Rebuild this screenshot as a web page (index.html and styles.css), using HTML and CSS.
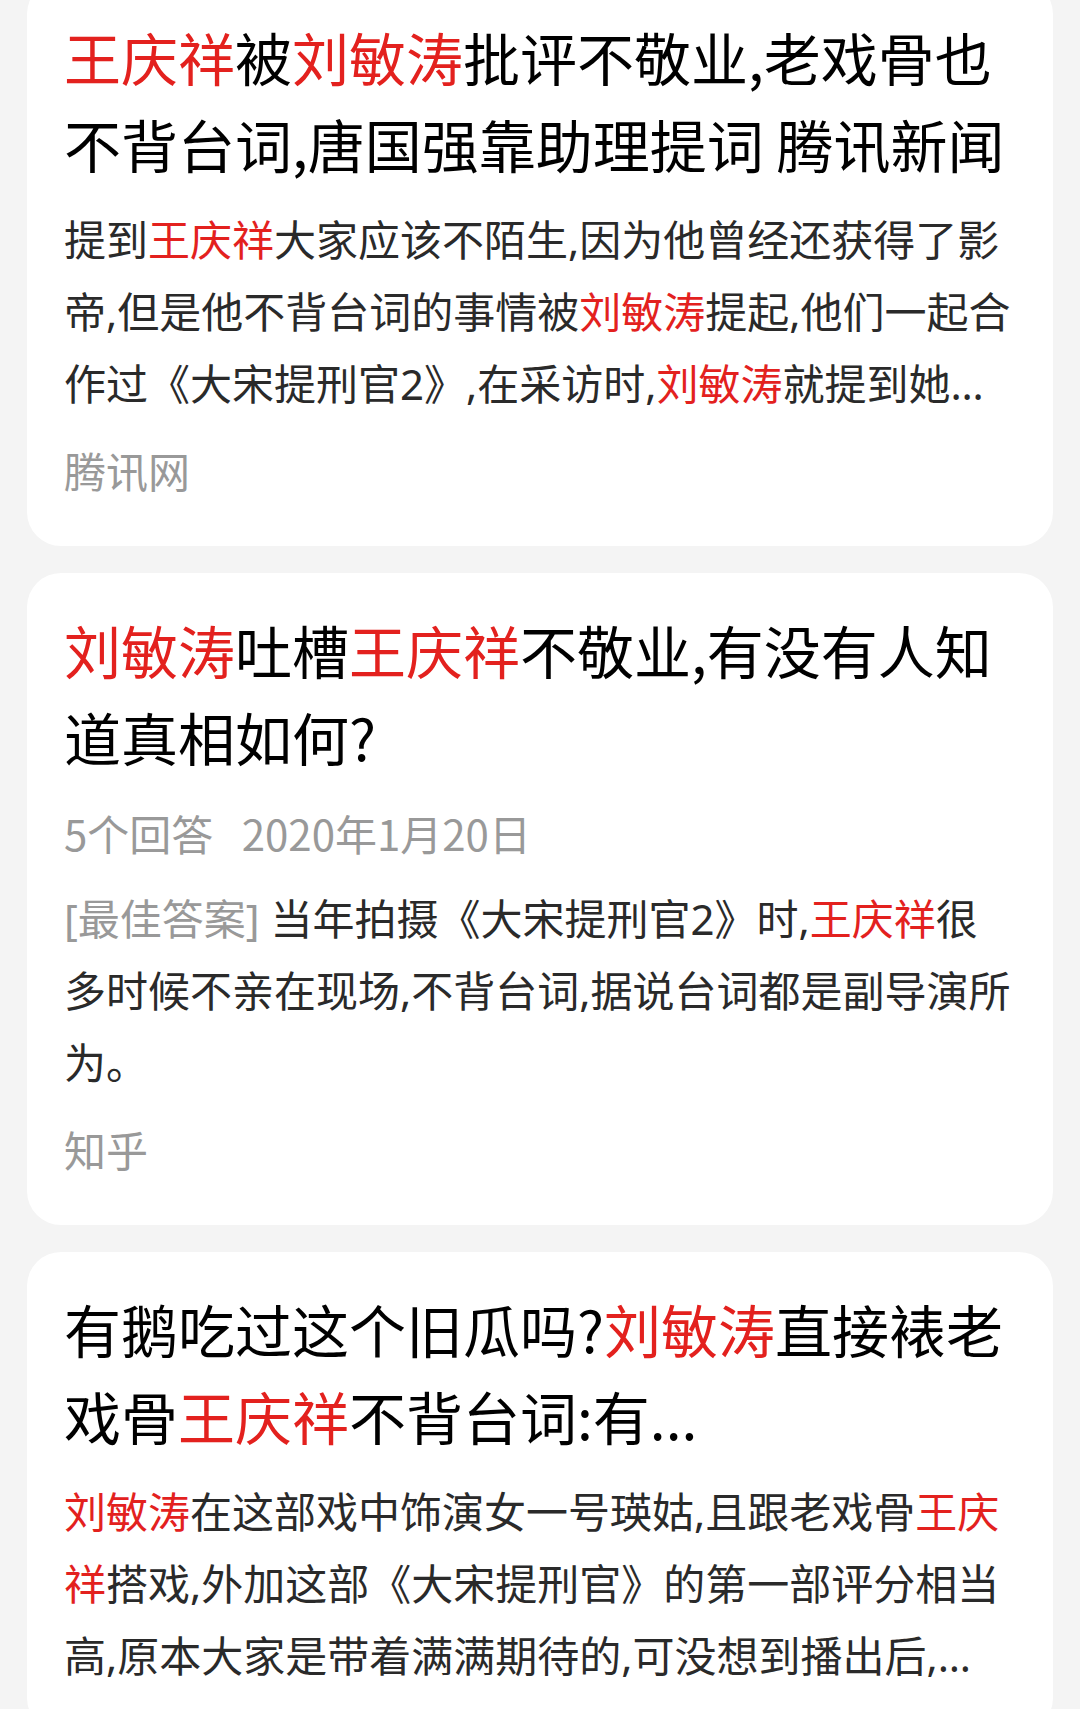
FILE: index.html
```html
<!DOCTYPE html>
<html lang="zh-CN">
<head>
    <meta charset="UTF-8">
    <meta name="viewport" content="width=device-width, initial-scale=1.0">
    <title>王庆祥 刘敏涛 - 搜索结果</title>
    <link rel="stylesheet" href="styles.css">
</head>
<body>

<div class="results">
    <div class="card scrolled">
        <h3 class="title"><em>王庆祥</em>被<em>刘敏涛</em>批评不敬业,老戏骨也不背台词,唐国强靠助理提词 腾讯新闻</h3>
        <p class="abstract clamp">提到<em>王庆祥</em>大家应该不陌生,因为他曾经还获得了影帝,但是他不背台词的事情被<em>刘敏涛</em>提起,他们一起合作过《大宋提刑官2》,在采访时,<em>刘敏涛</em>就提到她…</p>
        <div class="source">腾讯网</div>
    </div>

    <div class="card">
        <h3 class="title"><em>刘敏涛</em>吐槽<em>王庆祥</em>不敬业,有没有人知道真相如何?</h3>
        <div class="meta">
            <span>5个回答</span>
            <span class="date">2020年1月20日</span>
        </div>
        <p class="abstract"><span class="tag">[最佳答案]</span> 当年拍摄《大宋提刑官2》时,<em>王庆祥</em>很多时候不亲在现场,不背台词,据说台词都是副导演所为。</p>
        <div class="source">知乎</div>
    </div>

    <div class="card">
        <h3 class="title">有鹅吃过这个旧瓜吗?<em>刘敏涛</em>直接裱老戏骨<em>王庆祥</em>不背台词:有...</h3>
        <p class="abstract clamp"><em>刘敏涛</em>在这部戏中饰演女一号瑛姑,且跟老戏骨<em>王庆祥</em>搭戏,外加这部《大宋提刑官》的第一部评分相当高,原本大家是带着满满期待的,可没想到播出后,…</p>
    </div>
</div>

</body>
</html>
```

FILE: styles.css
```css
html {
    background-color: #f4f4f4;
}
body {
    font-family: "Noto Sans CJK SC", "Noto Sans", sans-serif;
    background-color: #f4f4f4;
    color: #111;
    margin: 0;
    padding: 0;
}
.results {
    display: flex;
    flex-direction: column;
    gap: 27px;
    padding: 0 27px;
}
.card {
    display: flex;
    flex-direction: column;
    gap: 14px;
    background-color: #fff;
    border-radius: 34px;
    padding: 33px 38px 40px 37px;
}
/* page is scrolled a little, first card runs off the top */
.card.scrolled {
    margin-top: -20px;
}
em {
    font-style: normal;
    color: #e3211e;
}
.title {
    margin: 0 0 3px;
    font-size: 57px;
    line-height: 87px;
    font-weight: normal;
    color: #000;
}
.abstract {
    margin: 0;
    font-family: "Noto Sans", "Noto Sans CJK SC", sans-serif;
    font-size: 42px;
    line-height: 72px;
    color: #2a2a2a;
}
.clamp {
    display: -webkit-box;
    -webkit-box-orient: vertical;
    -webkit-line-clamp: 3;
    overflow: hidden;
}
.tag {
    color: #999;
}
.meta {
    font-size: 42px;
    line-height: 72px;
    color: #999;
}
.meta .date {
    margin-left: 19px;
}
.source {
    font-size: 42px;
    line-height: 72px;
    color: #999;
}
```
